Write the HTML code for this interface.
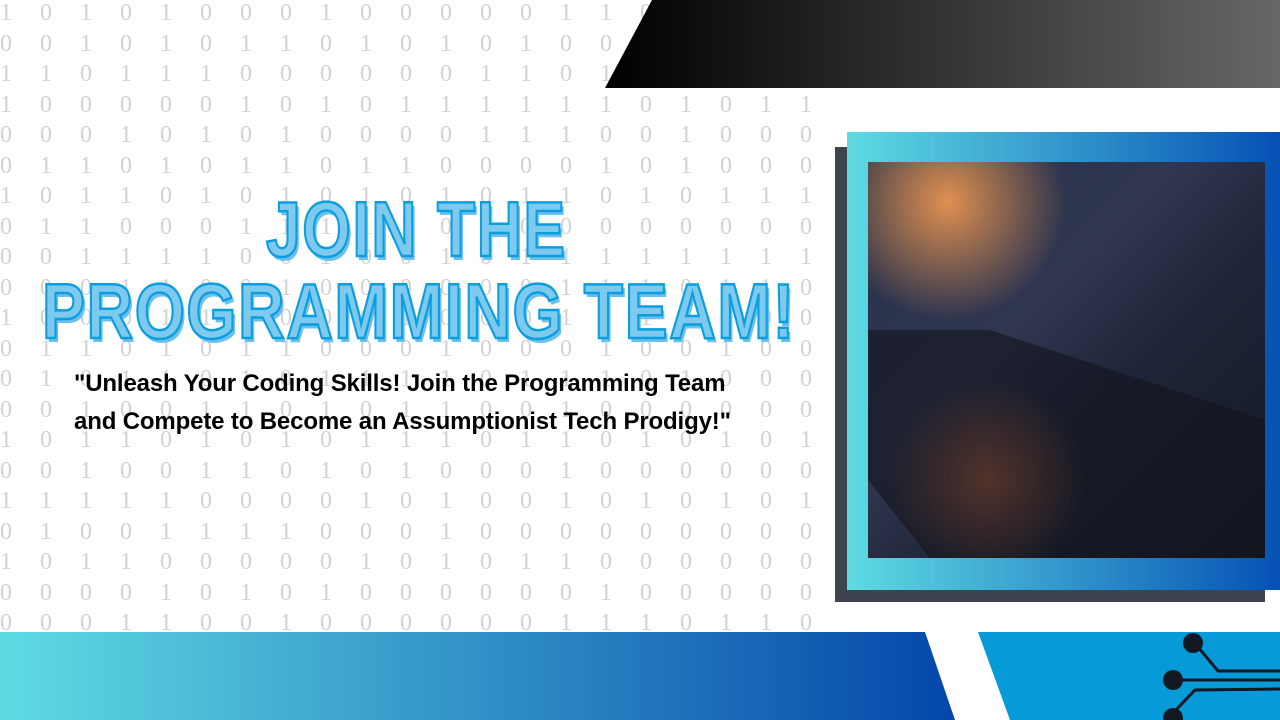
<!DOCTYPE html>
<html><head><meta charset="utf-8"><style>
body{margin:0;width:1280px;height:720px;overflow:hidden;background:#fff;position:relative;font-family:"Liberation Sans",sans-serif}
.bin{position:absolute;left:0;top:-2px;width:830px;height:632px;overflow:hidden;color:#d2d2d2;font-family:"Liberation Serif",serif;font-size:24px;line-height:30.5px;white-space:pre;word-spacing:22px}
.t{position:absolute;font-weight:bold;color:#7ec9ee;-webkit-text-stroke:2.5px #0a9ee0;text-shadow:3px 4px 0 #6cc0ea;transform-origin:left top;white-space:nowrap;letter-spacing:2px}
.q{position:absolute;left:74px;font-weight:bold;font-size:24px;color:#000;letter-spacing:-0.15px;white-space:nowrap}
</style></head><body>
<div class="bin">1 0 1 0 1 0 0 0 1 0 0 0 0 0 1 1 0 1 0 0 0
0 0 1 0 1 0 1 1 0 1 0 1 0 1 0 0 1 0 0 0 0
1 1 0 1 1 1 0 0 0 0 0 0 1 1 0 1 0 0 0 1 0
1 0 0 0 0 0 1 0 1 0 1 1 1 1 1 1 0 1 0 1 1
0 0 0 1 0 1 0 1 0 0 0 0 1 1 1 0 0 1 0 0 0
0 1 1 0 1 0 1 1 0 1 1 0 0 0 0 1 0 1 0 0 0
1 0 1 1 0 1 0 1 0 1 0 1 0 1 1 0 1 0 1 1 1
0 1 1 0 0 0 1 1 1 1 1 0 1 0 0 0 0 0 0 0 0
0 0 1 1 1 1 0 0 1 0 0 1 0 1 1 1 1 1 1 1 1
0 0 0 1 1 0 0 1 0 0 0 0 0 0 1 1 1 0 1 1 0
1 0 0 0 1 1 0 0 0 0 1 0 0 0 1 1 1 1 0 0 0
0 1 1 0 1 0 1 1 0 0 0 1 0 0 0 1 0 0 1 0 0
0 1 0 1 1 0 1 0 1 1 1 1 0 1 1 1 0 1 0 0 0
0 0 1 0 0 1 1 0 1 0 1 1 0 0 1 0 0 0 0 0 0
1 0 1 1 0 1 0 1 0 1 1 1 0 1 1 0 1 0 1 0 1
0 0 1 0 0 1 1 0 1 0 1 0 0 0 1 0 0 0 0 0 0
1 1 1 1 1 0 0 0 0 1 0 1 0 0 1 0 1 0 1 0 1
0 1 0 0 1 1 1 1 0 0 0 1 0 0 0 0 0 0 0 0 0
1 0 1 1 0 0 0 0 0 1 0 1 0 1 1 0 0 0 0 0 0
0 0 0 0 1 0 1 0 1 0 0 0 0 0 0 1 0 0 0 0 0
0 0 0 1 1 0 0 1 0 0 0 0 0 0 1 1 1 0 1 1 0</div>
<svg style="position:absolute;left:0;top:0" width="1280" height="720">
<defs>
<linearGradient id="tb" x1="0" x2="1"><stop offset="0" stop-color="#000"/><stop offset="1" stop-color="#676767"/></linearGradient>
<linearGradient id="bb" x1="0" x2="1"><stop offset="0" stop-color="#5fdbe3"/><stop offset="1" stop-color="#0447aa"/></linearGradient>
<linearGradient id="fr" x1="0" y1="0" x2="1" y2="0"><stop offset="0" stop-color="#5fdbe3"/><stop offset="1" stop-color="#0551b4"/></linearGradient>
<linearGradient id="ph" x1="0" y1="0" x2="1" y2="1"><stop offset="0" stop-color="#26304a"/><stop offset=".4" stop-color="#303650"/><stop offset=".6" stop-color="#1e2538"/><stop offset="1" stop-color="#141824"/></linearGradient>
<radialGradient id="or" cx=".2" cy=".1" r=".3"><stop offset="0" stop-color="#e09050"/><stop offset="1" stop-color="#e09050" stop-opacity="0"/></radialGradient>
<radialGradient id="or2" cx=".3" cy=".8" r=".25"><stop offset="0" stop-color="#b06040"/><stop offset="1" stop-color="#b06040" stop-opacity="0"/></radialGradient>
</defs>
<polygon points="652,0 1280,0 1280,88 605,88" fill="url(#tb)"/>
<rect x="835" y="147" width="430" height="455" fill="#3d444e"/>
<rect x="847" y="132" width="433" height="458" fill="url(#fr)"/>
<rect x="868" y="162" width="397" height="396" fill="url(#ph)"/>
<rect x="868" y="162" width="397" height="396" fill="url(#or)"/>
<rect x="868" y="162" width="397" height="396" fill="url(#or2)"/>
<polygon points="868,330 990,330 1265,420 1265,558 930,558 868,480" fill="#12141c" opacity=".6"/>
<polygon points="0,632 925,632 955,720 0,720" fill="url(#bb)"/>
<polygon points="978,632 1280,632 1280,720 1010,720" fill="#079ad9"/>
<g stroke="#111822" stroke-width="3" fill="none"><path d="M1193,641 L1218,671 L1280,671"/><path d="M1173,680 L1280,680"/><path d="M1173,713 L1195,690 L1280,689"/></g>
<g fill="#111822"><circle cx="1193" cy="643" r="10"/><circle cx="1173" cy="680" r="10"/><circle cx="1173" cy="718" r="10"/></g>
</svg>
<div class="t" style="left:266px;top:184px;font-size:78px;transform:scaleX(.8)">JOIN THE</div>
<div class="t" style="left:42px;top:266px;font-size:78px;transform:scaleX(.825)">PROGRAMMING TEAM!</div>
<div class="q" style="top:370px">"Unleash Your Coding Skills! Join the Programming Team</div>
<div class="q" style="top:408px">and Compete to Become an Assumptionist Tech Prodigy!"</div>
</body></html>
